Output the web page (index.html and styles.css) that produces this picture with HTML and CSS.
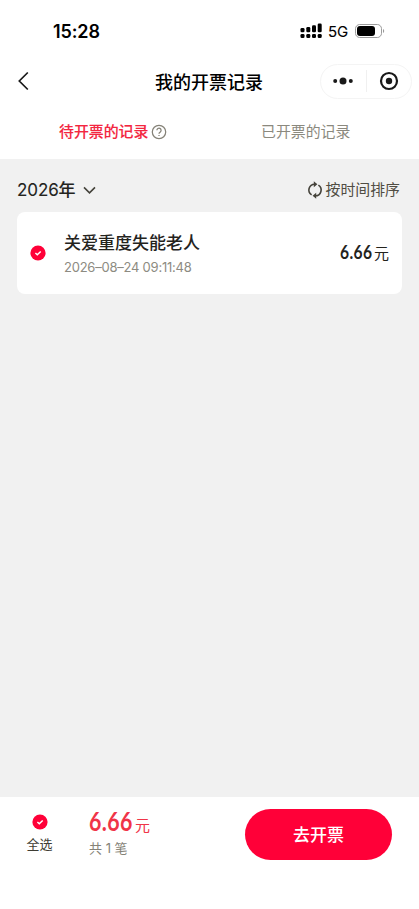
FILE: index.html
```html
<!DOCTYPE html>
<html lang="zh-CN">
<head>
<meta charset="utf-8">
<meta name="viewport" content="width=device-width, initial-scale=1">
<title>我的开票记录</title>
<link rel="stylesheet" href="styles.css">
</head>
<body>
<div class="app">
  <header class="status">
    <span class="clock">15:28</span>
    <div class="signals">
      <svg class="cell" width="22" height="16" viewBox="0 0 22 16">
        <rect x="0.5" y="5" width="4" height="4.2" rx="1.3"/><rect x="6.3" y="4" width="4" height="5.2" rx="1.3"/><rect x="12" y="2.2" width="4" height="7" rx="1.3"/><rect x="17.7" y="0.5" width="4" height="8.7" rx="1.3"/>
        <rect x="0.5" y="11" width="4" height="4" rx="1.3"/><rect x="6.3" y="11" width="4" height="4" rx="1.3"/><rect x="12" y="11" width="4" height="4" rx="1.3"/><rect x="17.7" y="11" width="4" height="4" rx="1.3"/>
      </svg>
      <span class="network">5G</span>
      <svg class="battery" width="30" height="14" viewBox="0 0 30 14">
        <rect x="0.5" y="0.5" width="26" height="13" rx="4.2" fill="none" stroke="#9b9b9b"/>
        <rect x="2" y="2" width="18" height="10" rx="3"/>
        <path d="M28 5v4q1.2-.6 1.2-2T28 5Z" fill="#9b9b9b"/>
      </svg>
    </div>
  </header>
  <nav class="titlebar">
    <svg class="back" width="11" height="20" viewBox="0 0 11 20"><path d="M9.8 1.5 1.3 10l8.5 8.5"/></svg>
    <h1 class="title">我的开票记录</h1>
    <div class="capsule">
      <svg class="more" width="22" height="10" viewBox="0 0 22 10"><circle cx="3.2" cy="5" r="2"/><circle cx="11" cy="5" r="3.5"/><circle cx="18.8" cy="5" r="2"/></svg>
      <span class="divider"></span>
      <svg class="target" width="20" height="20" viewBox="0 0 20 20"><circle cx="10" cy="10" r="8" fill="none" stroke="#191919" stroke-width="2.2"/><circle cx="10" cy="10" r="3.2"/></svg>
    </div>
  </nav>
  <div class="tabs">
    <div class="tab tab-active">
      <span>待开票的记录</span>
      <svg class="help" width="16" height="16" viewBox="0 0 16 16"><circle cx="8" cy="8" r="6.7"/><path d="M5.9 6.3a2.1 2.1 0 1 1 3.5 1.6C8.5 8.5 8 8.8 8 9.8M8 10.9v1.2"/></svg>
    </div>
    <div class="tab tab-done">已开票的记录</div>
  </div>
  <main class="content">
    <div class="filters">
      <div class="year"><span>2026<b>年</b></span><svg width="13" height="9" viewBox="0 0 13 9"><path d="m1 1.4 5.5 5.5L12 1.4"/></svg></div>
      <div class="sort">
        <svg width="16" height="16" viewBox="0 0 16 16"><path d="M4.6 12.9A5.8 5.8 0 0 1 7.8 2.2M11.4 3.1A5.8 5.8 0 0 1 8.2 13.8"/><path class="tip" d="m6.8-.8 3.6 3-3.6 3ZM9.2 10.8v6l-3.6-3Z"/></svg>
        <span>按时间排序</span>
      </div>
    </div>
    <article class="record">
      <svg class="check" width="16" height="16" viewBox="0 0 16 16"><circle cx="8" cy="8" r="7.6"/><path d="m5.4 8 1.9 1.8 3.4-3.3"/></svg>
      <div class="info">
        <h2 class="name">关爱重度失能老人</h2>
        <time class="time">2026–08–24 09:11:48</time>
      </div>
      <div class="amount"><span class="digits">6.66</span><span class="unit">元</span></div>
    </article>
  </main>
  <footer class="footer">
    <div class="select-all">
      <svg class="check" width="16" height="16" viewBox="0 0 16 16"><circle cx="8" cy="8" r="7.6"/><path d="m5.4 8 1.9 1.8 3.4-3.3"/></svg>
      <span>全选</span>
    </div>
    <div class="summary">
      <div class="total"><span class="digits">6.66</span><span class="unit">元</span></div>
      <div class="count">共 1 笔</div>
    </div>
    <button class="submit">去开票</button>
  </footer>
</div>
</body>
</html>
```

FILE: styles.css
```css
* { box-sizing: border-box; }
body {
  margin: 0;
  background: #fff;
  color: #24231d;
  font-family: Inter, "Noto Sans CJK SC", sans-serif;
}
h1, h2 { margin: 0; }
svg { display: block; flex: none; overflow: visible; }
span, h1, h2, time, .tab, .count { white-space: nowrap; }
.app { display: flex; flex-direction: column; height: 909px; overflow: hidden; }

.status { display: flex; justify-content: space-between; align-items: center; height: 62px; padding: 0 35px 0 53px; color: #000; }
.clock { font-size: 18px; font-weight: 600; letter-spacing: -0.1px; }
.signals { display: flex; align-items: center; }
.network { margin-left: 6px; width: 27px; font-size: 15px; font-weight: 400; -webkit-text-stroke: 0.1px; padding-top: 1px; }
.battery { margin-right: -1px; }

.titlebar { display: grid; grid-template-columns: 100px 1fr 100px; align-items: center; height: 38px; padding: 0 7px 0 18px; }
.back { fill: none; stroke: #191919; stroke-width: 1.7; }
.title { padding-top: 3px; color: #000; font-size: 18px; line-height: 26px; font-weight: 500; text-align: center; margin-left: -12px; }
.capsule { display: flex; align-items: center; justify-self: end; width: 92px; height: 35px; padding: 0 12px 0 11px; border: 1px solid #f4f4f4; border-radius: 18px; fill: #191919; }
.divider { flex: none; width: 1px; height: 22px; margin: 0 12px; background: #f0f0f0; }

.tabs { display: flex; height: 59px; color: #8b897e; font-size: 14.9px; line-height: 22px; }
.tab { display: flex; align-items: flex-start; padding-top: 21px; }
.tab-active { width: 261px; padding-left: 59px; color: #f3263f; font-weight: 500; -webkit-text-stroke: 0.1px; }
.help { margin: 3px 0 0 3px; fill: none; stroke: #858277; stroke-width: 1.25; }

.content { flex: 1; padding: 0 17px; background: #f1f1f1; }
.filters { display: flex; justify-content: space-between; align-items: center; height: 53px; padding: 9px 2px 0 0; }
.year { display: flex; align-items: center; font-size: 17px; font-weight: 400; -webkit-text-stroke: 0.1px; line-height: 25px; letter-spacing: -0.1px; }
.year b { font-weight: 500; }
.year svg { margin: 1px 0 0 7px; fill: none; stroke: #45433b; stroke-width: 1.6; }
.sort { display: flex; align-items: center; gap: 3px; font-size: 14.9px; line-height: 22px; color: #504d43; }
.sort svg { fill: none; stroke: #45433b; stroke-width: 1.6; }
.sort .tip { fill: #45433b; stroke: none; }

.record { display: flex; align-items: center; height: 82px; padding: 0 13px; border-radius: 8px; background: #fff; }
.check { fill: #ff0038; }
.check path { fill: none; stroke: #fff; stroke-width: 1.5; }
.info { flex: 1; margin-left: 18px; }
.name { padding-top: 1px; font-size: 17px; line-height: 25px; font-weight: 500; }
.time { display: block; margin-top: 2px; font-size: 13px; line-height: 18px; color: #8d8b82; letter-spacing: -0.23px; }
.digits { display: block; font-family: Lato, sans-serif; font-weight: 700; letter-spacing: 0.5px; transform-origin: left center; transform: scaleX(0.82); }
.amount, .total { display: flex; align-items: baseline; }
.amount { margin-top: -2px; }
.amount .digits { width: 34px; font-size: 19px; line-height: 26px; }
.amount .unit { font-size: 15px; }

.footer { display: flex; height: 112px; padding-top: 12px; background: #fff; }
.select-all { display: flex; flex-direction: column; align-items: center; width: 79px; padding-top: 5px; font-size: 13px; line-height: 20px; color: #3e3c33; }
.select-all span { margin-top: 4px; }
.summary { width: 156px; padding-left: 10px; }
.total { height: 29px; margin-top: -2px; color: #f03448; }
.total .digits { width: 46px; font-size: 26px; line-height: 28px; }
.total .unit { font-size: 15px; line-height: 20px; }
.count { padding-top: 2px; font-size: 13px; line-height: 20px; color: #858277; }
.submit { width: 147px; height: 51px; margin-left: 10px; padding: 0 0 3px; border: 0; border-radius: 26px; background: #ff0038; color: #fff; font: 500 17px "Noto Sans CJK SC", sans-serif; }
```
